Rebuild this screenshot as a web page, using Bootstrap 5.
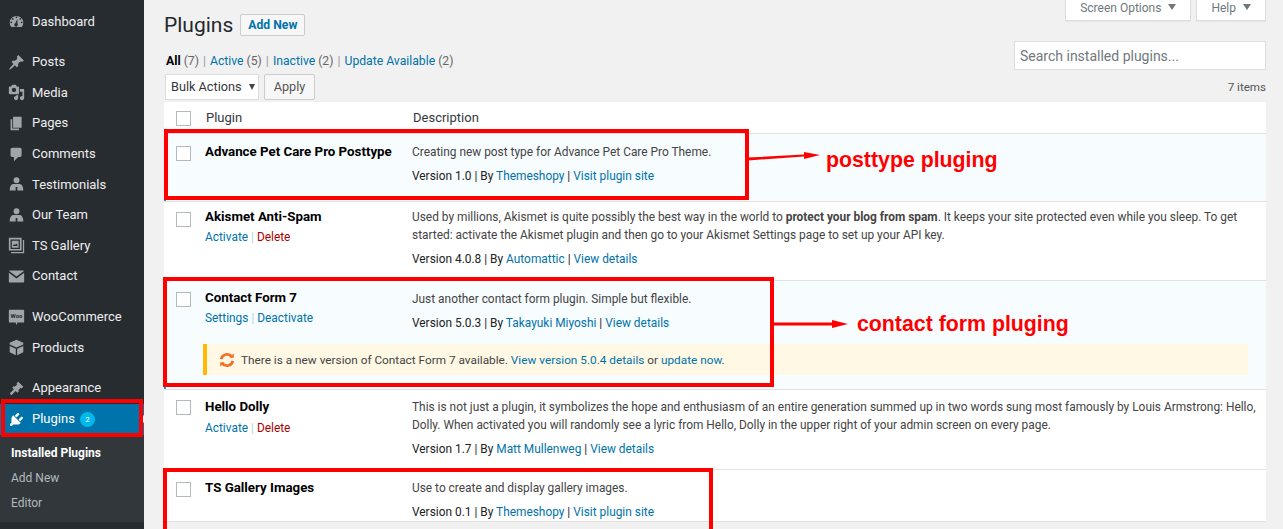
<!DOCTYPE html>
<html lang="en"><head><meta charset="utf-8"><title>Plugins</title>
<link href="https://cdn.jsdelivr.net/npm/bootstrap@5.3.0/dist/css/bootstrap.min.css" rel="stylesheet">
<style>
html,body{height:529px;overflow:hidden}
body{background:#f1f1f1;font:13px/18px Roboto,sans-serif;color:#444;position:relative}
a{color:#0073aa;text-decoration:none}
.wp-shell{height:529px}
.wp-side{width:144px;background:#272c31;color:#eee;flex:none;padding-top:6.4px;height:529px}
.wp-item{height:30.6px;display:flex;align-items:center;padding-left:8px;font-size:13px;color:#eee;gap:7px}
.wp-item svg{width:17px;height:17px;fill:#a0a5aa;flex:none}
.wp-sep{height:10px}
.wp-active{background:#0073aa;color:#fff;height:31px;position:relative}
.wp-active svg{fill:#fff}
.wp-bubble{width:15px;height:15px;margin-left:-2px;border-radius:50%;background:#00b9eb;color:#fff;font-size:8px;line-height:15px;text-align:center}
.wp-caret{position:absolute;right:0;top:11px;border:4px solid transparent;border-right-color:#f1f1f1;border-left:0}
.wp-sub{background:#32373c;padding:6.500px 0 0;height:87px;font-size:12px;color:#b4b9be}
.wp-sub div{padding-left:11px;height:25px;line-height:25px}
.wp-sub .wp-cur{color:#fff;font-weight:700}
.wp-main{flex:1;padding:0 17px 0 20px;min-width:0}
.wp-tabs{height:21px;justify-content:flex-end;gap:5px}
.wp-tab{background:#fff;border:1px solid #ddd;border-top:0;height:21px;color:#72777c;font-size:12px;line-height:16px;padding:0 14px;box-shadow:0 1px 1px rgba(0,0,0,.04)}
.wp-tab i{display:inline-block;border:4px solid transparent;border-top:6px solid #72777c;border-bottom:0;margin-left:7px;vertical-align:2px}
.wp-head{margin-top:-11px;height:30px;align-items:center}
.wp-head h1{font-size:21px;font-weight:400;color:#23282d;margin:0 7px 0 0;line-height:26px}
.wp-add{border:1px solid #ccc;background:#f7f7f7;color:#0073aa;font-size:12.200px;font-weight:700;height:22px;line-height:20px;padding:0 7px;border-radius:2px}
.wp-filter{height:29px;margin-top:1px;align-items:flex-end;justify-content:space-between}
.wp-links{font-size:12.200px;color:#666;line-height:18px;padding-left:2px}
.wp-links b{color:#000;font-weight:700}
.wp-links span.sep{color:#999;margin:0 1px}
.wp-search{width:252px;height:29px;background:#fff;border:1px solid #ddd;color:#72777c;font-size:14px;line-height:28px;padding-left:5px}
.wp-tool{height:32px;padding-top:2px;align-items:center;justify-content:space-between}
.wp-bulk{width:94px;height:26px;margin-left:1px;border:1px solid #ddd;background:#fff;color:#32373c;font-size:12.700px;line-height:24px;padding-left:5px;position:relative}
.wp-bulk i{position:absolute;right:3px;top:9px;border:3px solid transparent;border-top:6px solid #444;border-bottom:0}
.wp-apply{width:51px;height:26px;border:1px solid #ccc;background:#f7f7f7;color:#555;font-size:12.700px;line-height:24px;text-align:center;border-radius:2px;margin-left:5px}
.wp-count{font-size:11.600px;color:#555}
.wp-table{width:1102px;table-layout:fixed;background:#fff;border-collapse:collapse}
.wp-table td,.wp-table th{vertical-align:top;padding:0;font-size:11.900px;line-height:18px}
.wp-table th{font-weight:400;font-size:13px;color:#32373c;height:31px;border-bottom:1px solid #e1e1e1;padding-top:7px}
.wp-table th+th{padding-left:1px}
.wp-cb{display:block;width:15px;height:15px;border:1px solid #b4b9be;background:#fff;margin-left:12px}
.wp-table th:first-child .wp-cb{margin-top:2px}
.wp-row td{border-bottom:1px solid #e1e1e1}
.wp-row.on td{background:#f7fcfe}
.wp-table .wp-row td:nth-child(1){padding-top:12px}
.wp-table .wp-row td:nth-child(2){padding-top:8px}
.wp-table .wp-row td:nth-child(3){padding-top:9px;padding-right:8px}
.wp-table .wp-row.wp-mid td:nth-child(1){padding-top:11px}
.wp-table .wp-row.wp-mid td:nth-child(2){padding-top:7px}
.wp-table .wp-row.wp-tight td:nth-child(1){padding-top:10px}
.wp-table .wp-row.wp-tight td:nth-child(2){padding-top:5px}
.wp-table .wp-row.wp-tight td:nth-child(3){padding-top:6px}
.wp-table .wp-row.wp-low td:nth-child(1){padding-top:10px}
.wp-table .wp-row.wp-low td:nth-child(2){padding-top:7px}
.wp-table .wp-row.wp-low td:nth-child(3){padding-top:8px}
.wp-table .wp-row td.wp-flat{border-bottom:0}
.wp-on-edge{box-shadow:inset 2px 0 0 #00a0d2}
.wp-name{font-weight:700;color:#000;font-size:13.300px;line-height:20px}
.wp-act{margin-top:1.500px;font-size:11.900px}
.wp-act em{font-style:normal;color:#a00}
.wp-act span{color:#ccc}
.wp-row p{margin:0}
.wp-row p.wp-meta{margin-top:6px;color:#222}
.wp-table td.wp-note-wrap{background:#f7fcfe;border-bottom:1px solid #e1e1e1;padding:0 18px 14px 39px}
.wp-note{background:#fff8e5;border-left:4px solid #ffb900;height:31px;font-size:11.800px;line-height:31px;display:flex;align-items:center;gap:5px;padding-left:11px}
.wp-note span{padding-top:1px}
.wp-note svg{width:18px;height:18px}
.wp-box{position:absolute;border:4px solid #f00}
.wp-label{position:absolute;color:#f00;font:700 21.300px/26px "Liberation Sans",sans-serif;white-space:nowrap}
.wp-arrow{position:absolute;overflow:visible}
</style></head><body>
<div class="d-flex wp-shell">
<nav class="wp-side">
<div class="wp-item"><svg viewBox="0 0 20 20"><path d="M3.800 16.600A8 8 0 1 1 16.200 16.600ZM10 4a1 1 0 1 0 0 2 1 1 0 0 0 0-2ZM5.500 6a1 1 0 1 0 0 2 1 1 0 0 0 0-2ZM14.500 6a1 1 0 1 0 0 2 1 1 0 0 0 0-2ZM3.800 10a1 1 0 1 0 0 2 1 1 0 0 0 0-2ZM16.200 10a1 1 0 1 0 0 2 1 1 0 0 0 0-2ZM11 7l-2.400 5.200a2 2 0 1 0 2.600.8Z" fill-rule="evenodd"/></svg>Dashboard</div>
<div class="wp-sep"></div>
<div class="wp-item"><svg viewBox="0 0 20 20"><path d="M10.440 3.020l1.820-1.820 6.360 6.350-1.830 1.820c-1.050-.68-2.480-.57-3.410.36l-.75.75c-.92.93-1.040 2.350-.35 3.410l-1.830 1.820-2.410-2.410-2.800 2.790c-.42.42-3.380 2.710-3.800 2.290s1.860-3.390 2.280-3.810l2.790-2.790L4.100 9.360l1.830-1.820c1.050.69 2.480.57 3.400-.36l.75-.75c.93-.92 1.050-2.350.36-3.410z"/></svg>Posts</div>
<div class="wp-item"><svg viewBox="0 0 20 20"><path d="M13 11V4c0-.55-.45-1-1-1h-1.670L9 1H5L3.670 3H2c-.55 0-1 .45-1 1v7c0 .55.45 1 1 1h10c.55 0 1-.45 1-1zM7 4.500c1.380 0 2.500 1.120 2.500 2.500S8.380 9.500 7 9.500 4.500 8.380 4.500 7 5.620 4.500 7 4.500zM14 6h5v10.500c0 1.380-1.120 2.500-2.500 2.500S14 17.880 14 16.500s1.120-2.500 2.500-2.500c.17 0 .34.020.5.050V9h-3V6zm-4 8.050V13h2v3.500c0 1.380-1.120 2.500-2.500 2.500S7 17.880 7 16.500 8.120 14 9.500 14c.17 0 .34.020.5.050z" fill-rule="evenodd"/></svg>Media</div>
<div class="wp-item"><svg viewBox="0 0 20 20"><path d="M6 15V2h10v13H6zm-1 1h8v2H3V5h2v11z"/></svg>Pages</div>
<div class="wp-item"><svg viewBox="0 0 20 20"><path d="M5 2h9c1.100 0 2 .9 2 2v7c0 1.100-.9 2-2 2h-2l-5 5v-5H5c-1.100 0-2-.9-2-2V4c0-1.100.9-2 2-2z"/></svg>Comments</div>
<div class="wp-item"><svg viewBox="0 0 20 20"><path d="M10 1.500a3.500 3.500 0 1 1 0 7 3.500 3.500 0 0 1 0-7ZM6 9.500h8c2.500.4 4 3 4 7.500h-7v-4H9v4H2c0-4.500 1.500-7.100 4-7.500Z"/></svg>Testimonials</div>
<div class="wp-item"><svg viewBox="0 0 20 20"><path d="M10 1.500a3.500 3.500 0 1 1 0 7 3.500 3.500 0 0 1 0-7ZM6 9.500h8c2.500.4 4 3 4 7.500h-7v-4H9v4H2c0-4.500 1.500-7.100 4-7.500Z"/></svg>Our Team</div>
<div class="wp-item"><svg viewBox="0 0 20 20"><path fill-rule="evenodd" d="M1 1h15v15H1Zm2 2v11h11V3ZM4.500 4.500h8v8h-8Zm1 6h6l-1.500-3-2 2-1-1ZM17.500 3.500H19V19H3.500v-1.500h14Z"/></svg>TS Gallery</div>
<div class="wp-item"><svg viewBox="0 0 20 20"><path d="M2 3h16a1 1 0 0 1 .8.400L10 10 1.200 3.400A1 1 0 0 1 2 3ZM1 5.500l9 6.800 9-6.800V16a1 1 0 0 1-1 1H2a1 1 0 0 1-1-1Z"/></svg>Contact</div>
<div class="wp-sep"></div>
<div class="wp-item"><svg viewBox="0 0 20 20"><path d="M2 1h16a1 1 0 0 1 1 1v13a1 1 0 0 1-1 1h-7l-1 3-1-3H2a1 1 0 0 1-1-1V2a1 1 0 0 1 1-1Z"/><text x="10" y="11" text-anchor="middle" font-size="7" font-weight="700" font-family="Roboto,sans-serif" style="fill:#272c31">Woo</text></svg>WooCommerce</div>
<div class="wp-item"><svg viewBox="0 0 20 20"><path d="M10 1l8 3.500v2L10 10 2 6.500v-2Zm-8 7.200 7.200 3.200V19L2 15.500Zm16 0v7.300L10.800 19v-7.600Z"/></svg>Products</div>
<div class="wp-sep"></div>
<div class="wp-item"><svg viewBox="0 0 20 20"><path d="M12 2l6 6-2 2-1-1-3 3 1 1-2 2-2-2-5 5-2-2 5-5-2-2 2-2 1 1 3-3-1-1z"/></svg>Appearance</div>
<div class="wp-item wp-active"><svg viewBox="0 0 20 20"><path d="M13.110 4.360L9.870 7.600 8 5.730l3.240-3.240c.35-.34 1.050-.2 1.560.32.52.51.66 1.210.31 1.550zm-8 1.770l.91-1.120 9.010 9.010-1.190.84c-.71.71-2.630 1.160-3.820 1.160H6.140L4.900 17.260c-.59.59-1.540.59-2.120 0-.59-.58-.59-1.530 0-2.120l1.240-1.240v-3.880c0-1.130.4-3.190 1.090-3.890zm7.260 3.970l3.240-3.240c.34-.35 1.040-.21 1.550.31.52.51.66 1.210.31 1.550l-3.240 3.250z"/></svg><span>Plugins</span><span class="wp-bubble">2</span><i class="wp-caret"></i></div>
<div class="wp-sub"><div class="wp-cur">Installed Plugins</div><div>Add New</div><div>Editor</div></div>
</nav>
<main class="wp-main">
<div class="d-flex wp-tabs"><div class="wp-tab">Screen Options<i></i></div><div class="wp-tab">Help<i></i></div></div>
<div class="d-flex wp-head"><h1>Plugins</h1><a class="wp-add" href="#">Add New</a></div>
<div class="d-flex wp-filter">
<div class="wp-links"><b>All</b> (7) <span class="sep">|</span> <a href="#">Active</a> (5) <span class="sep">|</span> <a href="#">Inactive</a> (2) <span class="sep">|</span> <a href="#">Update Available</a> (2)</div>
<div class="wp-search">Search installed plugins...</div>
</div>
<div class="d-flex wp-tool"><div class="d-flex"><div class="wp-bulk">Bulk Actions<i></i></div><div class="wp-apply">Apply</div></div><div class="wp-count">7 items</div></div>
<table class="wp-table">
<colgroup><col style="width:41px"><col style="width:207px"><col></colgroup>
<thead><tr><th><span class="wp-cb"></span></th><th>Plugin</th><th>Description</th></tr></thead>
<tbody>
<tr class="wp-row on" style="height:68px"><td class="wp-on-edge"><span class="wp-cb"></span></td><td><div class="wp-name">Advance Pet Care Pro Posttype</div></td><td><p>Creating new post type for Advance Pet Care Pro Theme.</p><p class="wp-meta">Version 1.0 | By <a href="#">Themeshopy</a> | <a href="#">Visit plugin site</a></p></td></tr>
<tr class="wp-row wp-tight" style="height:79px"><td><span class="wp-cb"></span></td><td><div class="wp-name">Akismet Anti-Spam</div><div class="wp-act"><a href="#">Activate</a> <span>|</span> <em>Delete</em></div></td><td><p>Used by millions, Akismet is quite possibly the best way in the world to <strong>protect your blog from spam</strong>. It keeps your site protected even while you sleep. To get started: activate the Akismet plugin and then go to your Akismet Settings page to set up your API key.</p><p class="wp-meta">Version 4.0.8 | By <a href="#">Automattic</a> | <a href="#">View details</a></p></td></tr>
<tr class="wp-row wp-mid on"><td class="wp-on-edge wp-flat"><span class="wp-cb"></span></td><td class="wp-flat"><div class="wp-name">Contact Form 7</div><div class="wp-act"><a href="#">Settings</a> <span>|</span> <a href="#">Deactivate</a></div></td><td class="wp-flat" style="height:64px"><p>Just another contact form plugin. Simple but flexible.</p><p class="wp-meta">Version 5.0.3 | By <a href="#">Takayuki Miyoshi</a> | <a href="#">View details</a></p></td></tr>
<tr><td colspan="3" class="wp-note-wrap wp-on-edge"><div class="wp-note"><svg viewBox="0 0 20 20" fill="none" stroke="#f56e28" stroke-width="3"><path d="M3.500 9A6.700 6.700 0 0 1 15.500 6.500"/><path d="M16.500 11A6.700 6.700 0 0 1 4.500 13.500"/><path d="M12.500 7.500h5v-5z" fill="#f56e28" stroke="none"/><path d="M7.500 12.500h-5v5z" fill="#f56e28" stroke="none"/></svg><span>There is a new version of Contact Form 7 available. <a href="#">View version 5.0.4 details</a> or <a href="#">update now</a>.</span></div></td></tr>
<tr class="wp-row wp-low" style="height:80px"><td><span class="wp-cb"></span></td><td><div class="wp-name">Hello Dolly</div><div class="wp-act"><a href="#">Activate</a> <span>|</span> <em>Delete</em></div></td><td><p>This is not just a plugin, it symbolizes the hope and enthusiasm of an entire generation summed up in two words sung most famously by Louis Armstrong: Hello, Dolly. When activated you will randomly see a lyric from Hello, Dolly in the upper right of your admin screen on every page.</p><p class="wp-meta">Version 1.7 | By <a href="#">Matt Mullenweg</a> | <a href="#">View details</a></p></td></tr>
<tr class="wp-row"><td><span class="wp-cb"></span></td><td><div class="wp-name">TS Gallery Images</div></td><td><p>Use to create and display gallery images.</p><p class="wp-meta">Version 0.1 | By <a href="#">Themeshopy</a> | <a href="#">Visit plugin site</a></p></td></tr>
</tbody></table>
</main></div>
<div class="wp-box" style="left:1px;top:399px;width:142px;height:38px"></div>
<div class="wp-box" style="left:164px;top:129px;width:585px;height:71px"></div>
<div class="wp-box" style="left:163px;top:277px;width:611px;height:110px"></div>
<div class="wp-box" style="left:163px;top:468px;width:550px;height:80px"></div>
<svg class="wp-arrow" style="left:748px;top:145px" width="75" height="20"><path d="M0 12.500 56 9.500V7L72 10 56 14V11.500L0 15.500Z" fill="#f00"/></svg>
<svg class="wp-arrow" style="left:772px;top:315px" width="78" height="20"><path d="M0 7.500H60V5L76 9 60 13V10.500H0Z" fill="#f00"/></svg>
<div class="wp-label" style="left:826px;top:147px">posttype pluging</div>
<div class="wp-label" style="left:857px;top:311px">contact form pluging</div>
</body></html>
